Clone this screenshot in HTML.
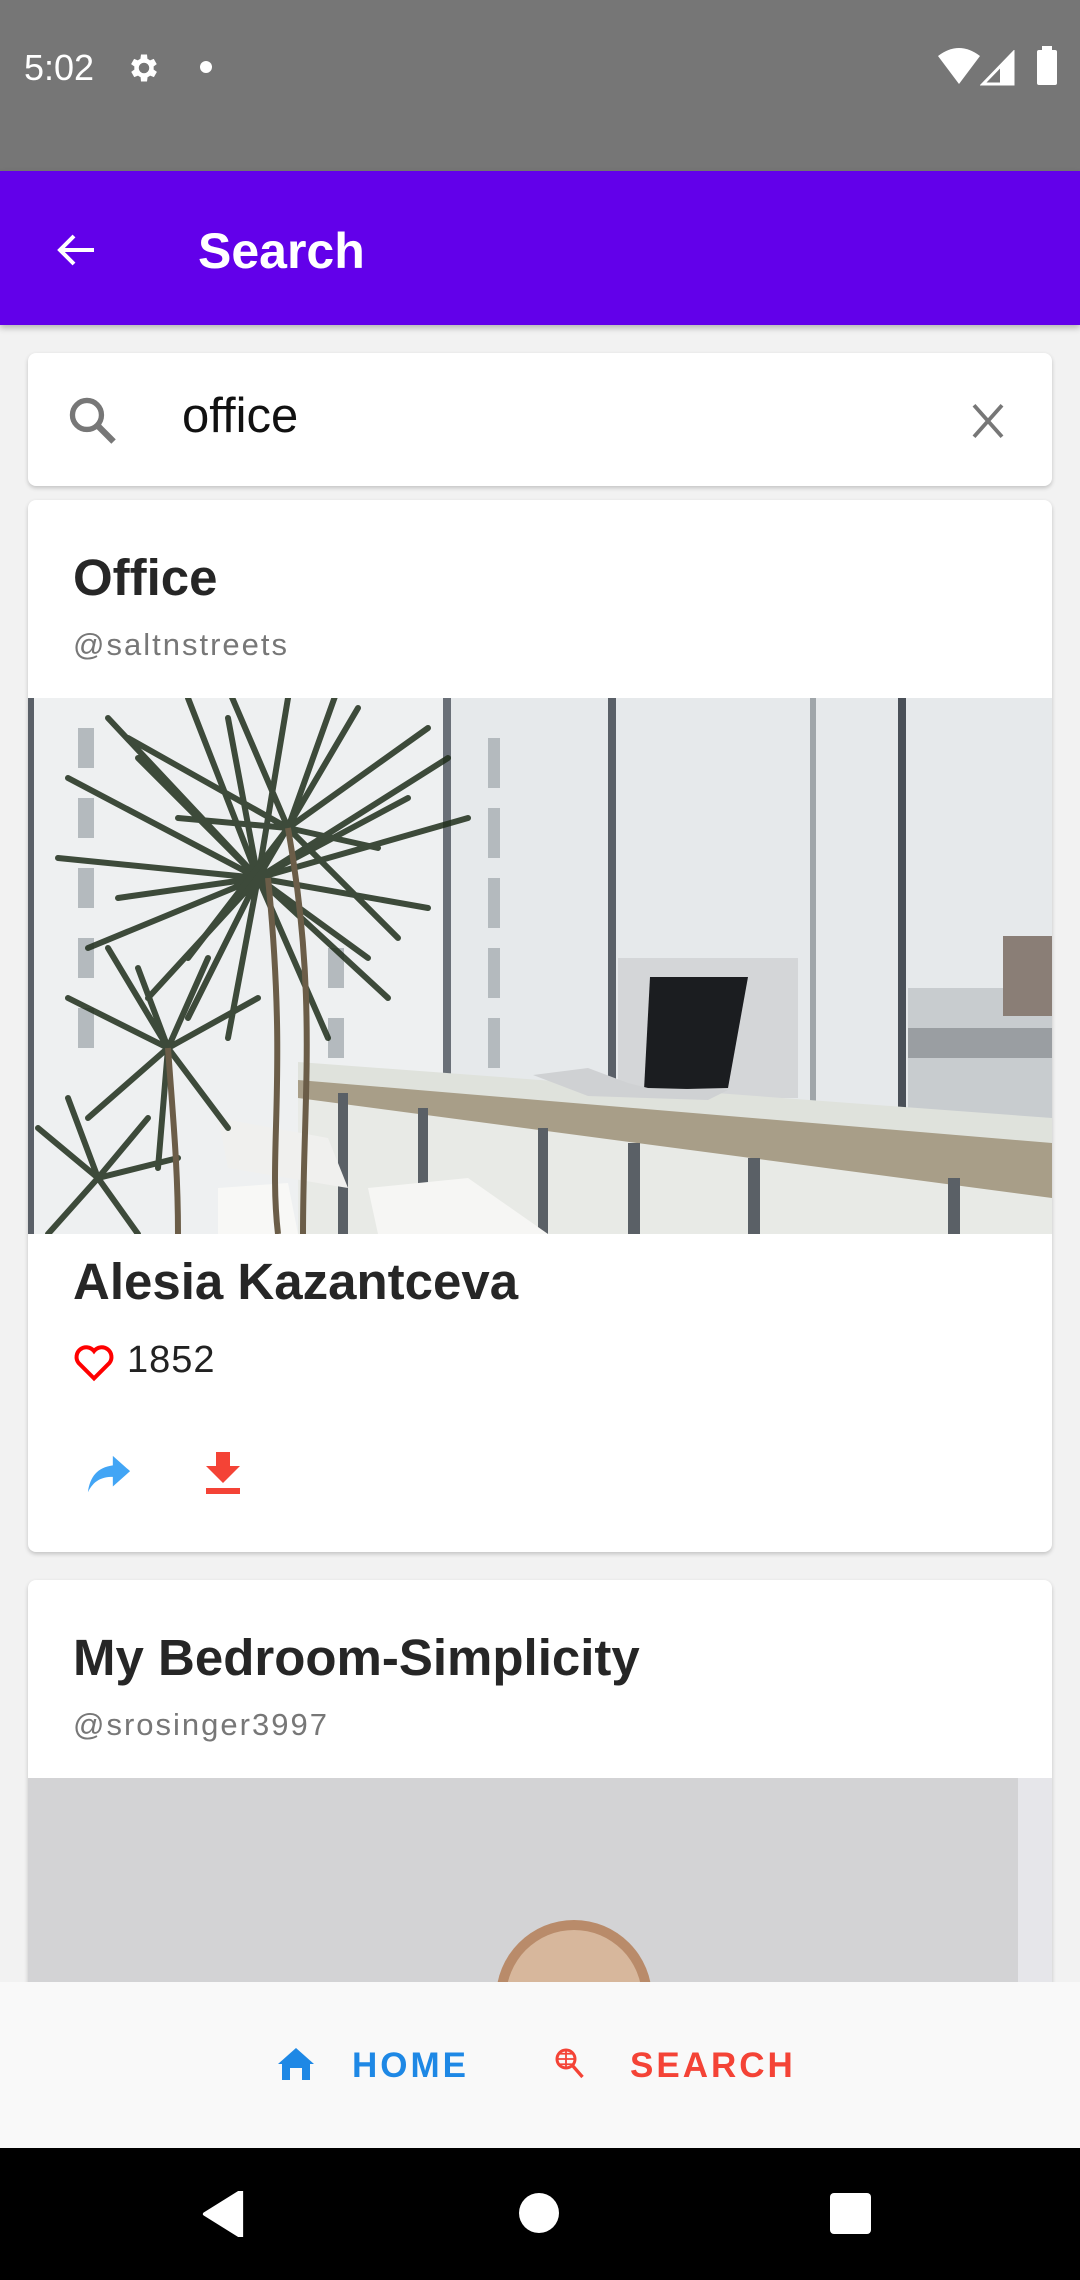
<!DOCTYPE html>
<html><head><meta charset="utf-8"><style>
*{margin:0;padding:0;box-sizing:border-box}
body{width:1080px;height:2280px;position:relative;overflow:hidden;background:#f2f2f2;font-family:"Liberation Sans",Roboto,sans-serif}
.abs{position:absolute}
.t{font-weight:bold;color:#262626}
</style></head><body>
<div class="abs" style="left:0;top:0;width:1080px;height:171px;background:#767676"></div>
<div class="abs" style="left:24px;top:47px;color:#fff;font-size:36px">5:02</div>
<svg class="abs" style="left:126px;top:50px" width="36" height="36" viewBox="0 0 24 24"><path fill="#fff" d="M19.4 13a7.5 7.5 0 000-2l2.1-1.6-2-3.5-2.5 1a7 7 0 00-1.7-1L15 3h-4l-.4 2.9a7 7 0 00-1.7 1l-2.5-1-2 3.5L6.6 11a7.5 7.5 0 000 2l-2.1 1.6 2 3.5 2.5-1a7 7 0 001.7 1L11 21h4l.4-2.9a7 7 0 001.7-1l2.5 1 2-3.5zM13 15.5a3.5 3.5 0 110-7 3.5 3.5 0 010 7z" transform="translate(-1 0)"/></svg>
<div class="abs" style="left:200px;top:61px;width:12px;height:12px;border-radius:50%;background:#fff"></div>
<svg class="abs" style="left:938px;top:48px" width="42" height="36" viewBox="0 0 42 36"><path fill="#fff" d="M0 8Q21-8 42 8L21 36Z"/></svg>
<svg class="abs" style="left:980px;top:50px" width="36" height="36" viewBox="0 0 36 36"><path fill="none" stroke="#fff" stroke-width="3" d="M33 3V34H3Z"/><path fill="#fff" d="M20 18L33 3V34H20Z"/></svg>
<div class="abs" style="left:1037px;top:50px;width:20px;height:35px;background:#fff;border-radius:2px"></div>
<div class="abs" style="left:1042px;top:46px;width:10px;height:5px;background:#fff"></div>
<div class="abs" style="left:0;top:171px;width:1080px;height:154px;background:#6200ea;box-shadow:0 3px 6px rgba(0,0,0,.25)"></div>
<svg class="abs" style="left:52px;top:226px" width="48" height="48" viewBox="0 0 24 24"><path fill="none" stroke="#fff" stroke-width="2" d="M21 12H4M11 5l-7 7 7 7"/></svg>
<div class="abs" style="left:198px;top:222px;color:#fff;font-size:50px;font-weight:bold">Search</div>
<div class="abs" style="left:28px;top:353px;width:1024px;height:133px;background:#fff;border-radius:8px;box-shadow:0 2px 4px rgba(0,0,0,.2)"></div>
<svg class="abs" style="left:64px;top:392px" width="58" height="58" viewBox="0 0 24 24"><circle cx="9.5" cy="9.5" r="6" fill="none" stroke="#777" stroke-width="2.2"/><path stroke="#777" stroke-width="2.6" d="M14 14l6.5 6.5"/></svg>
<div class="abs" style="left:182px;top:388px;font-size:49px;color:#111">office</div>
<svg class="abs" style="left:964px;top:400px" width="48" height="42" viewBox="0 0 24 24"><path stroke="#777" stroke-width="2.2" d="M4 3l16 18M20 3L4 21"/></svg>
<div class="abs" style="left:28px;top:500px;width:1024px;height:1052px;background:#fff;border-radius:8px;box-shadow:0 2px 4px rgba(0,0,0,.2);overflow:hidden">
 <div class="abs t" style="left:45px;top:48px;font-size:51px">Office</div>
 <div class="abs" style="left:45px;top:127px;font-size:31px;color:#777;letter-spacing:2px">@saltnstreets</div>
 <svg class="abs" style="left:0;top:198px" width="1024" height="536" viewBox="0 0 1024 536">
  <rect width="1024" height="536" fill="#e6e9eb"/>
  <rect x="0" y="0" width="420" height="536" fill="#eef0f1"/>
  <g fill="#b4babe"><rect x="50" y="30" width="16" height="40"/><rect x="50" y="100" width="16" height="40"/><rect x="50" y="170" width="16" height="40"/><rect x="50" y="240" width="16" height="40"/><rect x="50" y="310" width="16" height="40"/><rect x="300" y="250" width="16" height="40"/><rect x="300" y="320" width="16" height="40"/><rect x="460" y="40" width="12" height="50"/><rect x="460" y="110" width="12" height="50"/><rect x="460" y="180" width="12" height="50"/><rect x="460" y="250" width="12" height="50"/><rect x="460" y="320" width="12" height="50"/></g>
  <rect x="0" y="0" width="6" height="536" fill="#5a6068"/>
  <rect x="415" y="0" width="8" height="536" fill="#6a7078"/>
  <rect x="580" y="0" width="8" height="536" fill="#5a6068"/>
  <rect x="782" y="0" width="6" height="536" fill="#a0a6aa"/>
  <rect x="870" y="0" width="8" height="536" fill="#4a5058"/>
  <rect x="590" y="260" width="180" height="140" fill="#d4d6d8"/>
  <rect x="880" y="290" width="144" height="246" fill="#c8cccf"/>
  <rect x="975" y="238" width="49" height="80" fill="#8a7e76"/>
  <rect x="880" y="330" width="144" height="30" fill="#9a9ea2"/>
  <path d="M270 368L1024 425V536H270Z" fill="#e8eae6"/>
  <path d="M270 378L1024 440V500L270 400Z" fill="#a89e88"/>
  <path d="M270 364L1024 420V445L270 382Z" fill="#dfe2dc"/>
  <g fill="#5a6066"><rect x="310" y="395" width="10" height="141"/><rect x="390" y="410" width="10" height="126"/><rect x="510" y="430" width="10" height="106"/><rect x="600" y="445" width="12" height="91"/><rect x="720" y="460" width="12" height="76"/><rect x="920" y="480" width="12" height="56"/></g>
  <path d="M622 279L720 279 700 390 616 392Z" fill="#1b1d20"/>
  <path d="M505 377L560 370 600 385 620 390 700 392 680 402 560 398Z" fill="#cfd1d3"/>
  <path d="M340 490L440 480 520 536H350Z" fill="#f6f6f4"/>
  <path d="M190 420L300 440 320 490 200 470Z" fill="#f0f0ee"/>
  <path d="M190 490L260 485 270 536H190Z" fill="#f8f8f6"/>
  <g stroke="#1f2e1b" stroke-width="6" fill="none" opacity=".85" stroke-linecap="round">
   <path d="M230 180L40 80M230 180L80 20M230 180L160 0M230 180L260 0M230 180L330 10M230 180L420 60M230 180L440 120M230 180L30 160M230 180L60 250M230 180L400 210M230 180L120 300M230 180L360 300M230 180L200 340M230 180L300 340M230 180L110 60M230 180L200 20M230 180L380 100M230 180L90 200M230 180L340 260M230 180L160 320"/>
   <path d="M260 130L100 40M260 130L200 -10M260 130L310 -10M260 130L400 30M260 130L370 240M260 130L160 260M260 130L350 150M260 130L150 120"/>
   <path d="M140 350L40 300M140 350L80 250M140 350L180 260M140 350L230 300M140 350L60 420M140 350L200 430M140 350L130 470M140 350L110 270"/>
   <path d="M70 480L10 430M70 480L40 400M70 480L120 420M70 480L150 460M70 480L20 536M70 480L110 536"/>
  </g>
  <g stroke="#6b5d48" stroke-width="6" fill="none"><path d="M250 536C240 450 260 380 240 180"/><path d="M275 536C275 400 290 300 260 130"/><path d="M150 536C150 470 145 420 140 350"/></g>
 </svg>
 <div class="abs t" style="left:45px;top:752px;font-size:51px">Alesia Kazantceva</div>
 <svg class="abs" style="left:44px;top:842px" width="44" height="40" viewBox="0 0 24 22"><path fill="none" stroke="#f00" stroke-width="2.2" d="M12 20L3.5 11.5A5 5 0 0112 5a5 5 0 018.5 6.5Z"/></svg>
 <div class="abs" style="left:99px;top:839px;font-size:38px;color:#222;letter-spacing:1px">1852</div>
 <svg class="abs" style="left:58px;top:955px" width="46" height="40" viewBox="0 0 24 20"><path fill="#42a5f5" d="M14 0l9 8-9 8v-5C8 11 4 13 1 19 2 11 6 6 14 5Z"/></svg>
 <svg class="abs" style="left:176px;top:952px" width="38" height="42" viewBox="0 0 19 21"><path fill="#f44336" d="M6 0h7v7h5l-8.5 8.5L1 7h5ZM1 18h17v3H1Z"/></svg>
</div>
<div class="abs" style="left:28px;top:1580px;width:1024px;height:500px;background:#fff;border-radius:8px;box-shadow:0 2px 4px rgba(0,0,0,.2);overflow:hidden">
 <div class="abs t" style="left:45px;top:48px;font-size:51px">My Bedroom-Simplicity</div>
 <div class="abs" style="left:45px;top:127px;font-size:31px;color:#777;letter-spacing:2px">@srosinger3997</div>
 <svg class="abs" style="left:0;top:198px" width="1024" height="302" viewBox="0 0 1024 302">
  <rect width="1024" height="302" fill="#d3d3d5"/>
  <rect x="990" y="0" width="34" height="302" fill="#e6e6ea"/>
  <circle cx="546" cy="220" r="78" fill="#b98b6a"/>
  <circle cx="546" cy="220" r="68" fill="#d7b79c"/>
 </svg>
</div>
<div class="abs" style="left:0;top:1982px;width:1080px;height:166px;background:#f9f9f9"></div>
<svg class="abs" style="left:278px;top:2048px" width="36" height="32" viewBox="0 0 18 16"><path fill="#1e88e5" d="M9 0L0 8h2v8h4V10h6v6h4V8h2Z"/></svg>
<div class="abs" style="left:352px;top:2046px;font-size:35px;color:#1e88e5;letter-spacing:3px;font-weight:bold">HOME</div>
<svg class="abs" style="left:554px;top:2047px" width="36" height="36" viewBox="0 0 24 24"><circle cx="8" cy="8" r="6" fill="none" stroke="#f44336" stroke-width="2"/><path stroke="#f44336" stroke-width="1.2" d="M2 8h12M8 2v12M4 4.5h8M4 11.5h8"/><path stroke="#f44336" stroke-width="2.2" d="M12 12l7 8"/></svg>
<div class="abs" style="left:630px;top:2046px;font-size:35px;color:#f44336;letter-spacing:3px;font-weight:bold">SEARCH</div>
<div class="abs" style="left:0;top:2148px;width:1080px;height:132px;background:#000"></div>
<svg class="abs" style="left:200px;top:2191px" width="46" height="46" viewBox="0 0 20 20"><path fill="#fff" d="M18 0V20L2 10Z" stroke="#fff" stroke-linejoin="round" stroke-width="1.5"/></svg>
<div class="abs" style="left:519px;top:2193px;width:40px;height:40px;border-radius:50%;background:#fff"></div>
<div class="abs" style="left:830px;top:2193px;width:41px;height:41px;border-radius:4px;background:#fff"></div>
</body></html>
